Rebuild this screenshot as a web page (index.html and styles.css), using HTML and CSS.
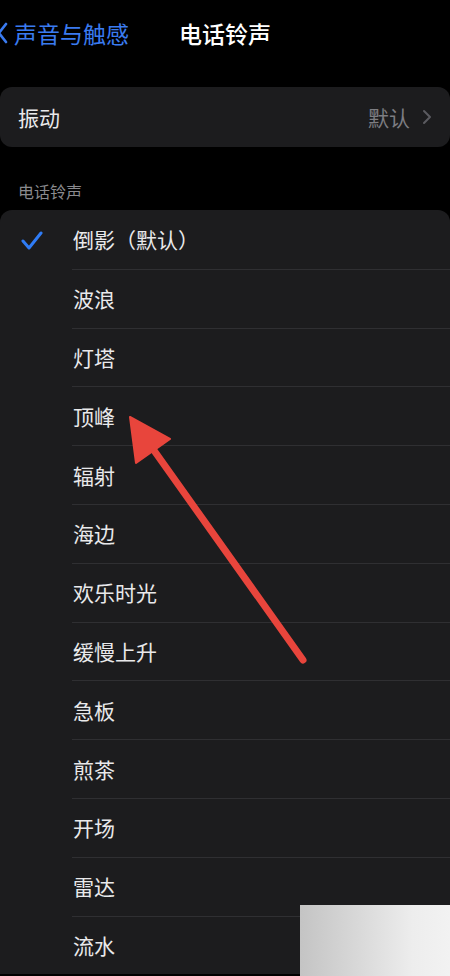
FILE: index.html
```html
<!DOCTYPE html>
<html lang="zh-CN">
<head>
    <meta charset="UTF-8">
    <meta name="viewport" content="width=device-width, initial-scale=1.0">
    <title>电话铃声</title>
    <link rel="stylesheet" href="styles.css">
</head>
<body>
    <div class="nav">
        <a class="back" href="#">
            <svg class="back-chevron" width="12" height="22" viewBox="0 0 12 22">
                <path d="M9 2 L2 11 L9 20" fill="none" stroke="#3a7bf0" stroke-width="2.6" stroke-linecap="round" stroke-linejoin="round"/>
            </svg>
            <span>声音与触感</span>
        </a>
        <h1 class="title">电话铃声</h1>
    </div>

    <div class="cell-group single">
        <div class="cell">
            <span class="cell-label">振动</span>
            <span class="cell-value">默认
                <svg width="10" height="16" viewBox="0 0 10 16">
                    <path d="M2 2 L8 8 L2 14" fill="none" stroke="#5b5b60" stroke-width="2" stroke-linecap="round" stroke-linejoin="round"/>
                </svg>
            </span>
        </div>
    </div>

    <div class="section-header">电话铃声</div>

    <div class="cell-group list">
        <div class="row selected">
            <span class="check">
                <svg width="22" height="20" viewBox="0 0 22 20">
                    <path d="M2 10 L8 17 L20 2" fill="none" stroke="#2f7cf6" stroke-width="3" stroke-linecap="round" stroke-linejoin="round"/>
                </svg>
            </span>
            <span class="row-text">倒影（默认）</span>
        </div>
        <div class="row"><span class="row-text">波浪</span></div>
        <div class="row"><span class="row-text">灯塔</span></div>
        <div class="row"><span class="row-text">顶峰</span></div>
        <div class="row"><span class="row-text">辐射</span></div>
        <div class="row"><span class="row-text">海边</span></div>
        <div class="row"><span class="row-text">欢乐时光</span></div>
        <div class="row"><span class="row-text">缓慢上升</span></div>
        <div class="row"><span class="row-text">急板</span></div>
        <div class="row"><span class="row-text">煎茶</span></div>
        <div class="row"><span class="row-text">开场</span></div>
        <div class="row"><span class="row-text">雷达</span></div>
        <div class="row"><span class="row-text">流水</span></div>
    </div>

    <!-- annotation arrow drawn over the screenshot -->
    <svg class="arrow" width="450" height="976" viewBox="0 0 450 976">
        <line x1="303" y1="660" x2="148" y2="442" stroke="#e8453c" stroke-width="7" stroke-linecap="round"/>
        <polygon points="130,417 170,439 136,463" fill="#e8453c" stroke="#e8453c" stroke-width="2" stroke-linejoin="round"/>
    </svg>

    <div class="watermark"></div>
</body>
</html>
```

FILE: styles.css
```css
body {
    margin: 0;
    background-color: #000;
    color: #e9e9eb;
    font-family: "Noto Sans CJK SC", "Noto Sans", sans-serif;
    width: 450px;
    height: 976px;
    overflow: hidden;
    position: relative;
}
.nav {
    height: 66px;
    display: flex;
    align-items: center;
    position: relative;
}
.back {
    display: flex;
    align-items: center;
    gap: 5px;
    color: #3a7bf0;
    text-decoration: none;
    font-size: 23px;
    margin-left: -3px;
}
.back-chevron {
    flex-shrink: 0;
}
.title {
    position: absolute;
    left: 0;
    right: 0;
    margin: 0;
    text-align: center;
    font-size: 23px;
    font-weight: 500;
    color: #fff;
    pointer-events: none;
}
.cell-group {
    background-color: #1c1c1e;
    border-radius: 12px;
}
.single {
    margin-top: 21px;
}
.cell {
    height: 60px;
    display: flex;
    align-items: center;
    justify-content: space-between;
    padding: 0 18px;
    font-size: 21px;
}
.cell-value {
    display: flex;
    align-items: center;
    gap: 12px;
    color: #7d7d82;
}
.section-header {
    font-size: 16px;
    color: #8a8a8e;
    padding: 34px 18px 8px;
    line-height: 21px;
}
.list {
    border-radius: 12px 12px 0 0;
}
.row {
    height: 58.8px;
    display: flex;
    align-items: center;
    position: relative;
    padding-left: 73px;
    font-size: 21px;
}
.row + .row::before {
    content: "";
    position: absolute;
    top: 0;
    left: 72px;
    right: 0;
    height: 1px;
    background-color: #2f2f32;
}
.check {
    position: absolute;
    left: 21px;
    top: 21px;
    display: flex;
}
.arrow {
    position: absolute;
    top: 0;
    left: 0;
    pointer-events: none;
}
.watermark {
    position: absolute;
    left: 300px;
    top: 905px;
    width: 150px;
    height: 71px;
    background: linear-gradient(90deg, #c4c4c4 0%, #d9d9d9 40%, #ededed 75%, #f2f2f2 100%);
}
```
